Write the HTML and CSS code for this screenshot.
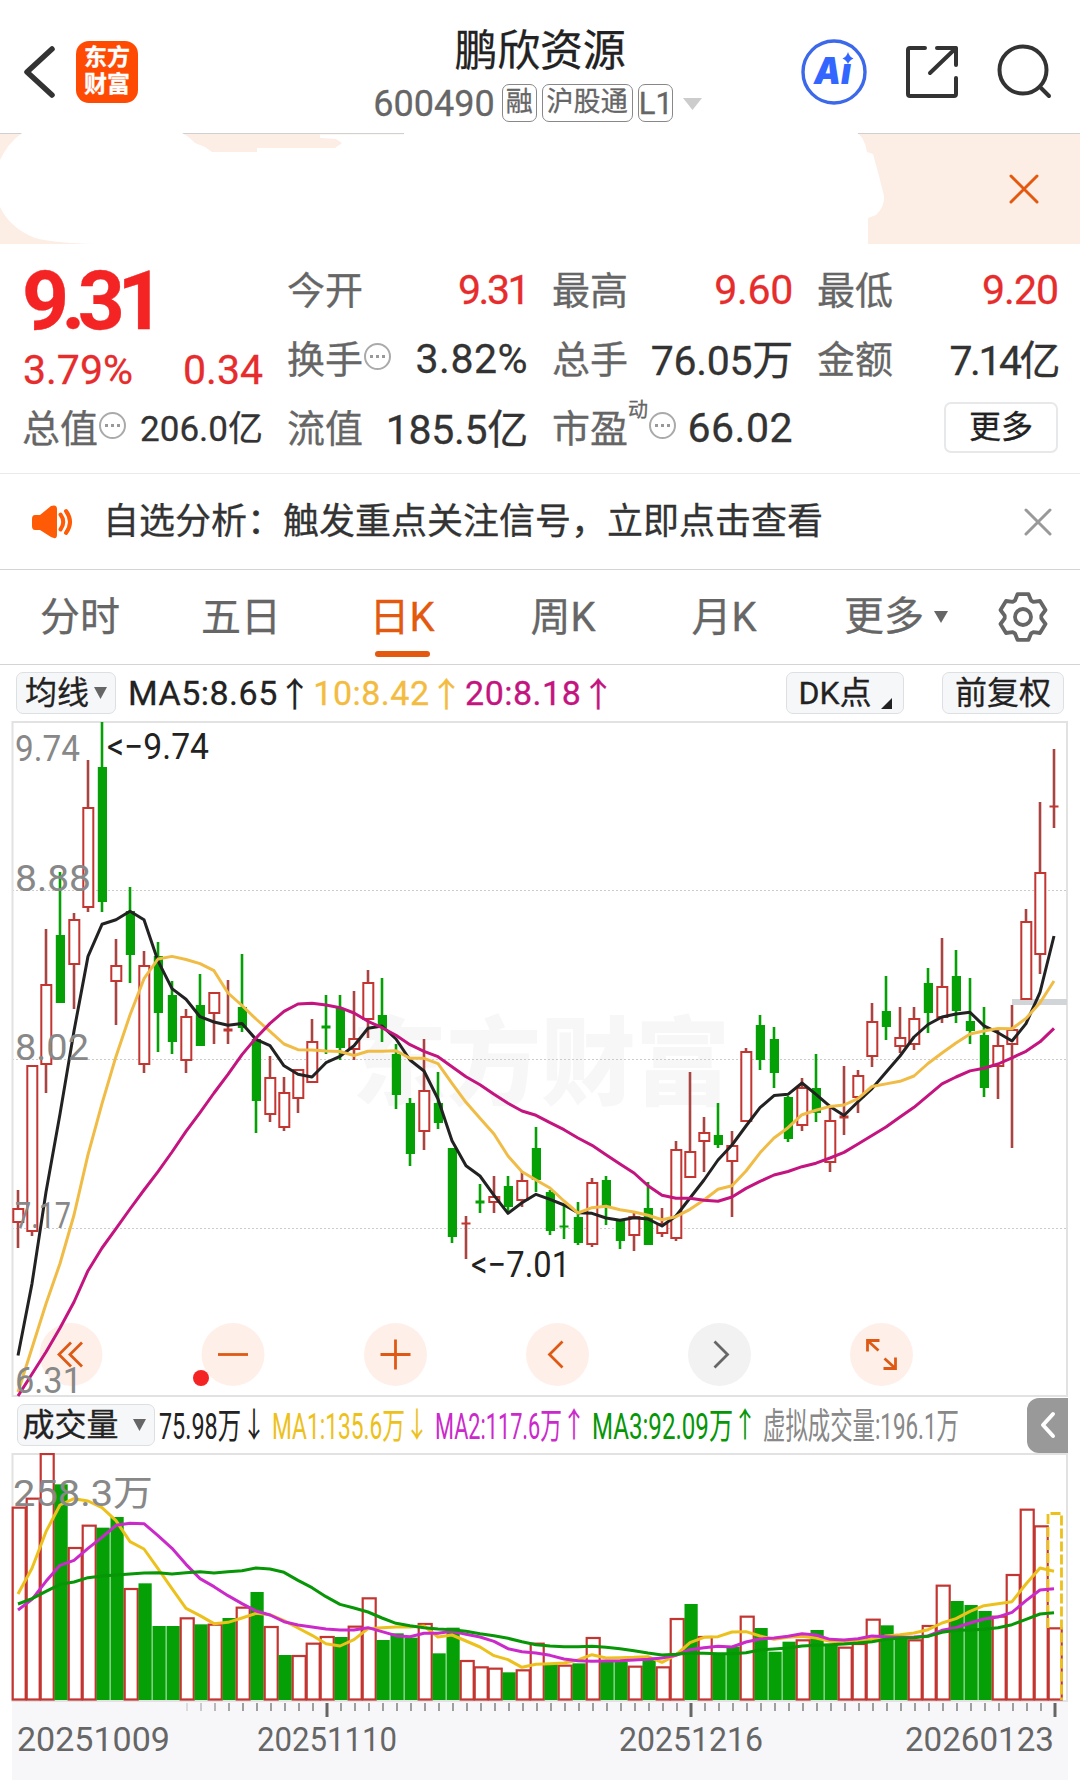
FILE: index.html
```html
<!DOCTYPE html>
<html lang="zh-CN">
<head>
<meta charset="utf-8">
<title>鹏欣资源 600490</title>
<link rel="stylesheet" href="styles.css">
</head>
<body>
<header class="topbar">
  <div class="topbar-left">
    <svg class="back" width="34" height="56" viewBox="0 0 34 56"><path d="M30 5 L5 28 L30 51"/></svg>
    <div class="logo"><span>东方</span><span>财富</span></div>
  </div>
  <div class="topbar-title">
    <h1>鹏欣资源</h1>
    <div class="subtitle">
      <span class="code">600490</span>
      <span class="tag">融</span><span class="tag tag-wide">沪股通</span><span class="tag tag-l1">L1</span>
      <svg class="caret" width="19" height="12" viewBox="0 0 19 12"><path d="M0 0H19L9.500 12Z" fill="#ccc"/></svg>
    </div>
  </div>
  <div class="topbar-right">
    <svg width="66" height="66" viewBox="0 0 66 66">
      <circle cx="33" cy="33" r="31" fill="#fff" stroke="#3c68ea" stroke-width="3.400"/>
      <text class="ai" x="13" y="45" textLength="37" lengthAdjust="spacingAndGlyphs">Aı</text>
      <path d="M47 13 Q48.500 18 52.500 19.500 Q48.500 21 47 25 Q45.500 21 41.500 19.500 Q45.500 18 47 13Z" fill="#3366ff"/>
    </svg>
    <svg width="54" height="54" viewBox="0 0 54 54" class="line-icon"><path d="M20 3H5Q3 3 3 5V49Q3 51 5 51H49Q51 51 51 49V33M32 3H51V20M51 3L25 28"/></svg>
    <svg width="56" height="56" viewBox="0 0 56 56" class="line-icon"><circle cx="26" cy="26" r="23.500"/><path d="M43 43L52 52"/></svg>
  </div>
</header>

<section class="banner">
  <svg class="banner-cover" width="1080" height="111" viewBox="0 133 1080 111">
    <path class="rule" d="M0 133.500H22M182 133.500H404M858 133.500H1080"/>
    <path fill="#fff" d="M22 133 Q8 143 0 160 V207 Q10 228 35 238 Q55 243 95 244 H868 V218 L876 215 Q885 206 884 196 L879 176 L873 154 L867 152 Q864 136 857 133 H404 V134.500 H320 V138 L336 139 L342 143 L335 148 H257 V152 H212 L205 147 L195 143 Q187 135 182 133Z"/>
  </svg>
  <svg class="banner-close" width="30" height="30" viewBox="0 0 30 30"><path d="M2 2L28 28M28 2L2 28" stroke="#e2590f" stroke-width="3" stroke-linecap="round"/></svg>
</section>

<section class="quote">
  <div class="col">
    <div class="price">9.31</div>
    <div class="change red"><span>3.79%</span><span>0.34</span></div>
    <div class="cell"><span class="k">总值<i class="info"></i></span><span class="v small">206.0亿</span></div>
  </div>
  <div class="col">
    <div class="cell"><span class="k">今开</span><span class="v red tight">9.31</span></div>
    <div class="cell"><span class="k">换手<i class="info"></i></span><span class="v wide">3.82%</span></div>
    <div class="cell"><span class="k">流值</span><span class="v cjk">185.5亿</span></div>
  </div>
  <div class="col">
    <div class="cell"><span class="k">最高</span><span class="v red">9.60</span></div>
    <div class="cell"><span class="k">总手</span><span class="v cjk">76.05万</span></div>
    <div class="cell"><span class="k">市盈<sup>动</sup><i class="info"></i></span><span class="v wide">66.02</span></div>
  </div>
  <div class="col">
    <div class="cell"><span class="k">最低</span><span class="v red tight2">9.20</span></div>
    <div class="cell"><span class="k">金额</span><span class="v cjk tight">7.14亿</span></div>
    <div class="cell end"><span class="more">更多</span></div>
  </div>
</section>

<section class="notice">
  <svg width="42" height="36" viewBox="0 0 42 36">
    <path d="M3 11H8L19 2Q25 0 25 5V31Q25 36 19 33L8 26H3Q0 26 0 22V15Q0 11 3 11Z" fill="#ff5a06"/>
    <path d="M28.500 10.500Q34 18 28.500 25.500M34 7Q42 18 34 29" fill="none" stroke="#ff5a06" stroke-width="4" stroke-linecap="round"/>
  </svg>
  <p>自选分析：触发重点关注信号，立即点击查看</p>
  <svg class="notice-close" width="28" height="28" viewBox="0 0 28 28"><path d="M2 2L26 26M26 2L2 26" stroke="#999" stroke-width="3" stroke-linecap="round"/></svg>
</section>

<nav class="tabs">
  <span>分时</span><span>五日</span><span class="active">日K</span><span>周K</span><span>月K</span>
  <span class="tab-more">更多<svg width="14" height="12" viewBox="0 0 14 12"><path d="M0 0H14L7 12Z" fill="#666"/></svg></span>
  <svg width="54" height="54" viewBox="-27 -27 54 54" fill="none" stroke="#666" stroke-width="3.800" stroke-linejoin="round">
    <path d="M-8 -16.500L-5.500 -22.800H5.500L8 -16.500L10.300 -15.200L17 -16L22.500 -7L18.300 -1.300V1.300L22.500 7L17 16L10.300 15.200L8 16.500L5.500 22.800H-5.500L-8 16.500L-10.300 15.200L-17 16L-22.500 7L-18.300 1.300V-1.300L-22.500 -7L-17 -16L-10.300 -15.200Z"/>
    <circle r="8"/>
  </svg>
</nav>

<div class="legend">
  <span class="chip chip-ma">均线<svg width="13" height="12" viewBox="0 0 13 12"><path d="M0 0H13L6.500 12Z" fill="#666"/></svg></span>
  <span class="ma ma5">MA5:8.65<b>↑</b></span>
  <span class="ma ma10">10:8.42<b>↑</b></span>
  <span class="ma ma20">20:8.18<b>↑</b></span>
  <span class="chip chip-dk">DK点<svg width="11" height="11" viewBox="0 0 11 11"><path d="M11 0V11H0Z" fill="#222"/></svg></span>
  <span class="chip chip-fq">前复权</span>
</div>

<svg id="kline" width="1080" height="676" viewBox="0 721 1080 676"></svg>

<div class="vol-legend">
  <span class="chip chip-vol">成交量<svg width="13" height="12" viewBox="0 0 13 12"><path d="M0 0H13L6.500 12Z" fill="#666"/></svg></span>
  <svg class="vol-values" width="810" height="56" viewBox="155 0 810 56">
    <text x="159" y="41.500" textLength="82" lengthAdjust="spacingAndGlyphs" fill="#222">75.98万</text><text class="arr" x="242" y="40" textLength="24" lengthAdjust="spacingAndGlyphs" fill="#222">↓</text>
    <text x="272" y="41.500" textLength="133" lengthAdjust="spacingAndGlyphs" fill="#edc11c">MA1:135.6万</text><text class="arr" x="405" y="40" textLength="24" lengthAdjust="spacingAndGlyphs" fill="#edc11c">↓</text>
    <text x="435" y="41.500" textLength="127" lengthAdjust="spacingAndGlyphs" fill="#cb2acb">MA2:117.6万</text><text class="arr" x="562" y="40" textLength="24" lengthAdjust="spacingAndGlyphs" fill="#cb2acb">↑</text>
    <text x="592" y="41.500" textLength="141" lengthAdjust="spacingAndGlyphs" fill="#069606">MA3:92.09万</text><text class="arr" x="733" y="40" textLength="24" lengthAdjust="spacingAndGlyphs" fill="#069606">↑</text>
    <text class="thin" x="763" y="41.500" textLength="196" lengthAdjust="spacingAndGlyphs" fill="#888">虚拟成交量:196.1万</text>
  </svg>
  <span class="drawer"><svg width="16" height="28" viewBox="0 0 16 28"><path d="M13 3L3 14L13 25"/></svg></span>
</div>

<svg id="volume" width="1080" height="334" viewBox="0 1453 1080 334"></svg>
<script src="chart.js"></script>
</body>
</html>
```

FILE: styles.css
```css
* { box-sizing: border-box; }
body {
  margin: 0; width: 1080px; height: 1787px; overflow: hidden;
  background: #fff; color: #333;
  font-family: Roboto, "Noto Sans CJK SC", sans-serif;
  -webkit-text-stroke: .3px currentColor;
}
svg { display: block; flex: none; }
.red { color: #e62c2c; }

.topbar { display: grid; grid-template-columns: 1fr auto 1fr; height: 133px; padding: 0 27px 0 22px; }
.topbar-left, .topbar-right { display: flex; align-items: center; padding-top: 11px; }
.topbar-left { gap: 20px; }
.topbar-right { justify-content: flex-end; gap: 38px; padding-top: 10px; }
.back path { fill: none; stroke: #333; stroke-width: 5.500; stroke-linecap: round; stroke-linejoin: round; }
.logo {
  width: 62px; height: 62px; border-radius: 13px; background: #ff4a03; color: #fff;
  display: flex; flex-direction: column; align-items: center; justify-content: center;
  font-weight: 700; font-size: 23px; line-height: 27px; padding-bottom: 2px;
}
.topbar-title { display: flex; flex-direction: column; align-items: center; padding-top: 26px; }
h1 { margin: 0 0 0 5px; font-size: 43px; line-height: 50px; font-weight: 400; color: #222; letter-spacing: -.3px; }
.subtitle { display: flex; align-items: center; height: 53px; color: #666; }
.code { font-size: 36px; margin-right: 7px; padding-top: 2px; }
.tag {
  height: 38px; width: 35px; border: 1px solid #888; border-radius: 7px; margin-right: 5px;
  font-size: 27px; line-height: 35px; text-align: center; color: #666;
}
.tag-wide { width: 91px; letter-spacing: .2px; }
.tag-l1 { font-size: 31px; line-height: 37px; width: 35px; }
.caret { margin-left: 5px; margin-top: 2px; }
.line-icon { fill: none; stroke: #333; stroke-width: 4; stroke-linecap: round; stroke-linejoin: round; }
.ai { font: italic 900 37px Inter, sans-serif; fill: #3366ff; }

.banner { height: 111px; background: #fceee5; display: grid; align-items: center; justify-items: end; }
.banner > * { grid-area: 1 / 1; }
.rule { stroke: #d0d0d0; stroke-width: 1; }
.banner-close { margin-right: 41px; }

.quote { height: 230px; padding: 11px 24px 0 23px; display: grid; grid-template-columns: repeat(4, 240px); gap: 25px; border-bottom: 1px solid #eaeaea; }
.cell { height: 69px; display: flex; align-items: center; justify-content: space-between; white-space: nowrap; }
.k { font-size: 38px; color: #666; display: flex; align-items: center; letter-spacing: 0; margin: -5px 0 0 -1px; }
.v { font-size: 41px; letter-spacing: -.3px; }
.v.cjk { margin-top: -4px; }
.v.small { font-size: 35px; letter-spacing: 0; margin-top: -4px; }
.v.wide { letter-spacing: .5px; }
.v.tight { letter-spacing: -2.500px; }
.v.tight2 { letter-spacing: -1px; }
.price { height: 92px; font-size: 82px; line-height: 92px; font-weight: 700; color: #f42424; letter-spacing: -7.500px; margin-left: -1px; }
.change { height: 46px; line-height: 46px; display: flex; justify-content: space-between; font-size: 41px; }
.info {
  width: 27px; height: 27px; border: 2px solid #aaa; border-radius: 50%; margin: 0 0 0 1px;
  background: radial-gradient(circle at 5.500px 11.500px, #999 1.500px, transparent 2px),
    radial-gradient(circle at 11.500px 11.500px, #999 1.500px, transparent 2px),
    radial-gradient(circle at 17.500px 11.500px, #999 1.500px, transparent 2px);
}
sup { font-size: 20px; line-height: 20px; align-self: flex-start; padding-top: 2px; }
.end { justify-content: flex-end; }
.more { width: 114px; height: 51px; border: 2px solid #e6e8ea; border-radius: 7px; font-size: 32px; line-height: 46px; text-align: center; color: #222; }

.notice { height: 96px; border-bottom: 1px solid #d4d4d4; display: flex; align-items: center; padding: 0 28px 0 32px; }
.notice p { margin: 1px auto 0 29px; font-size: 36px; line-height: 50px; }

.tabs { height: 95px; border-bottom: 1px solid #d4d4d4; display: grid; grid-template-columns: 161px 161px 161px 161px 161px 161px 80px; align-items: center; text-align: center; font-size: 40px; color: #666; }
.tabs span { line-height: 96px; height: 94px; margin-left: -1px; }
.tabs .active { position: relative; color: #e2590f; }
.tabs .active::after { content: ""; position: absolute; left: 54px; top: 81px; width: 55px; height: 6px; border-radius: 3px; background: #e2590f; }
.tab-more { display: flex; align-items: center; justify-content: center; gap: 10px; padding-left: 22px; }
.tabs > svg { margin-left: 30px; }

.legend { height: 56px; display: flex; align-items: center; padding: 0 16px; font-size: 34px; white-space: nowrap; }
.chip { height: 42px; border: 1px solid #dde0e3; border-radius: 7px; background: #f6f7f9; color: #222; font-size: 32px; line-height: 38px; display: flex; align-items: center; justify-content: center; }
.chip-ma { width: 100px; gap: 5px; }
.ma { display: flex; align-items: center; letter-spacing: .5px; }
.ma b { font: 34px/40px "Noto Sans CJK SC", sans-serif; margin: 0 -8px 0 0; }
.ma5 { color: #222; margin-left: 12px; }
.ma10 { color: #f3bc41; margin-left: 9px; }
.ma20 { color: #c3147f; margin-left: 9px; }
.chip-dk { width: 118px; margin-left: auto; gap: 9px; }
.chip-dk svg { margin-top: 20px; }
.chip-fq { width: 122px; margin-left: 38px; }

.axis { font-size: 36px; fill: #888; }
.mark { font-size: 36px; fill: #222; }
.date { font-size: 34px; fill: #666; }
.watermark { font-size: 96px; font-weight: 900; fill: #f7f7f7; -webkit-text-stroke: 0; }
.line { fill: none; stroke-width: 3; stroke-linejoin: round; }

.vol-legend { height: 56px; display: flex; align-items: center; padding-left: 17px; }
.chip-vol { width: 138px; gap: 14px; padding-right: 4px; }
.vol-values text { font-size: 36px; }
.vol-values .arr { font-family: "Noto Sans CJK SC", sans-serif; font-size: 34px; }
.vol-values .thin { -webkit-text-stroke: 0; }
.drawer { width: 41px; height: 55px; margin: 0 12px 0 auto; background: #999; border-radius: 12px 0 0 12px; display: flex; align-items: center; justify-content: center; }
.drawer path { fill: none; stroke: #fff; stroke-width: 4; stroke-linecap: round; stroke-linejoin: round; }
```

FILE: chart.js
```js
const NS = 'http://www.w3.org/2000/svg';
const STEP = 14, FIRST = 18;
const RED = '#c23531', WICK = '#a94442', GREEN = '#05a005';
const cx = i => FIRST + i * STEP;

function add(parent, tag, attrs, text) {
  const el = document.createElementNS(NS, tag);
  for (const k in attrs) el.setAttribute(k, attrs[k]);
  if (text) el.textContent = text;
  parent.appendChild(el);
  return el;
}
function line(parent, ys, color) {
  add(parent, 'polyline', { class: 'line', stroke: color, points: ys.map((y, i) => cx(i) + ',' + y).join(' ') });
}
function label(parent, cls, x, y, width, text) {
  add(parent, 'text', { class: cls, x, y, textLength: width, lengthAdjust: 'spacingAndGlyphs' }, text);
}

// r = rising, g = falling; then high, body top, body bottom, low
const candles = `r 1190 1209 1222 1248|r 1066 1066 1231 1236|r 929 985 1064 1093|g 872 935 1003 1003|r 913 920 964 1009
r 760 808 907 912|g 722 767 902 912|r 939 966 981 1025|g 887 911 955 983|r 951 966 1064 1073
g 942 956 1013 1052|g 981 995 1042 1054|r 1009 1017 1060 1073|g 974 1005 1046 1046|r 992 993 1013 1044
r 980 1029 1031 1044|g 954 1007 1028 1032|g 1038 1039 1101 1133|r 1056 1078 1114 1122|r 1077 1093 1127 1131
r 1069 1070 1098 1113|r 1019 1042 1082 1082|g 995 1026 1028 1054|g 995 1008 1048 1060|r 991 1039 1049 1060
r 970 983 1019 1038|g 978 1015 1028 1042|g 1044 1054 1095 1109|g 1098 1103 1154 1166|r 1039 1091 1131 1150
g 1072 1103 1123 1129|g 1148 1148 1237 1243|r 1216 1223 1224 1259|g 1184 1201 1203 1213|r 1176 1197 1202 1213
g 1176 1186 1207 1213|r 1171 1181 1200 1207|g 1127 1148 1180 1192|g 1190 1192 1231 1235|g 1204 1226 1227 1239
g 1202 1217 1243 1245|r 1178 1183 1244 1247|g 1176 1180 1206 1225|g 1220 1221 1241 1249|r 1213 1217 1235 1251
g 1182 1208 1245 1245|r 1208 1224 1233 1237|r 1141 1150 1238 1241|r 1072 1152 1177 1177|r 1117 1133 1141 1172
g 1103 1135 1145 1148|r 1131 1146 1161 1217|r 1048 1052 1121 1121|g 1015 1025 1060 1070|g 1027 1039 1073 1088
g 1096 1097 1139 1142|r 1078 1088 1125 1131|g 1054 1088 1113 1122|r 1107 1121 1162 1172|r 1066 1116 1118 1135
r 1070 1076 1097 1113|r 1003 1022 1056 1067|g 976 1011 1027 1040|r 1007 1038 1046 1053|r 1007 1019 1044 1050
g 968 983 1013 1033|r 938 987 1017 1023|g 950 976 1011 1023|g 978 1021 1031 1044|g 1007 1035 1088 1097
r 1030 1046 1066 1099|r 1005 1030 1044 1148|r 909 922 999 999|r 802 873 954 974|r 749 806 807 828`
  .split(/[|\n]/).map(s => { const [t, ...v] = s.trim().split(' '); return [t, ...v.map(Number)]; });

const ma5 = [1355.5,1283.6,1192,1114,1031,956.4,924.3,919.8,911.3,919.8,960.9,988.6,999.3,1016.7,1022,1025.2,1023.4,1039.4,1045.7,1065.8,1074.3,1077,1062.7,1056.4,1045.7,1028.3,1026,1039,1060,1071,1099,1140.7,1165.7,1176,1195.3,1213.3,1202.7,1194.3,1199.3,1205,1212.7,1213.3,1218,1220.3,1217.7,1219,1226,1216,1198,1180,1160,1145,1126,1107.7,1095.6,1094.3,1083,1094.3,1106.4,1115.5,1101.7,1088.6,1072.2,1056,1037,1024.5,1017,1014,1012.3,1025.8,1032.7,1041,1023.6,992.4,936];
const ma10 = [1392,1348,1303.7,1263.5,1215,1154.6,1103.7,1056.4,1015,978.7,959,956.4,959.5,963.6,970.7,993,1005.5,1019,1031.4,1044,1049.7,1050,1051,1051.5,1055.5,1051.3,1051.3,1050.7,1058.3,1058.3,1063.7,1083.3,1102.3,1118.3,1134,1156,1171.7,1180,1188,1201,1213,1207.7,1206.3,1209.7,1212,1215.3,1219.7,1216.7,1209.3,1200,1189.3,1185.8,1171,1152.8,1138,1127.7,1114.7,1110.3,1106.4,1105,1098.6,1086.5,1083.9,1081.3,1076,1063.5,1053,1043,1034,1031,1028.4,1028.8,1018.4,1002.8,981];
const ma20 = [1396,1374,1352,1328,1302,1270.7,1248,1228.7,1209,1190,1171.6,1152,1131.4,1112.6,1093,1074.3,1054.6,1038,1023.4,1011.3,1004,1003.3,1005,1007.7,1013,1021.3,1027.7,1035.3,1044.7,1051.3,1056.7,1066.7,1076.7,1084.7,1094.3,1103.3,1111,1115.3,1122.7,1129.7,1138,1145.3,1154.7,1164,1173,1185.7,1195.3,1198.3,1198.3,1200.3,1201.3,1197,1188.4,1181.4,1175,1171.5,1166.7,1163.2,1158,1152.4,1144,1135.5,1127,1117,1107.3,1095.6,1083.9,1077,1070.9,1068.3,1064,1057.8,1051.3,1041.8,1028.4];

const k = document.getElementById('kline');
label(k, 'watermark', 352, 1097, 378, '东方财富');
for (const y of [890.5, 1059.5, 1228.5]) add(k, 'path', { d: `M12 ${y}H1067`, stroke: '#ccc', 'stroke-dasharray': '2 2' });
add(k, 'rect', { x: 12.5, y: 722, width: 1054.5, height: 674, fill: 'none', stroke: '#e2e2e2', 'stroke-width': 2 });

// floating chart controls
const controls = [
  [71, 'M0 -12L-12 0L0 12M11 -12L-1 0L11 12'], [233, 'M-15 0H15'], [395.5, 'M-15 0H15M0 -15V15'],
  [557.5, 'M5 -13L-8 0L5 13'], [719.5, 'M-5 -13L8 0L-5 13'],
  [881.5, 'M-14 -3V-14H-2M-14 -14L-3 -4M14 3V14H2M14 14L3 4']];
controls.forEach(([x, d], i) => {
  const g = add(k, 'g', { transform: `translate(${x} 1354.500)` });
  add(g, 'circle', { r: 31.5, fill: i === 4 ? '#f2f2f2' : '#fef0e9' });
  add(g, 'path', { d, fill: 'none', stroke: i === 4 ? '#666' : '#de5a14', 'stroke-width': 2.8 });
});
add(k, 'circle', { cx: 201, cy: 1378, r: 8, fill: '#f42424' });
add(k, 'rect', { x: 1012, y: 999, width: 55, height: 6, fill: '#d2d5d8' });

candles.forEach(([t, hi, top, bottom, lo], i) => {
  const x = cx(i), up = t === 'r', color = up ? RED : GREEN;
  if (hi < top) add(k, 'path', { d: `M${x} ${hi}V${top}`, stroke: up ? WICK : GREEN, 'stroke-width': 2.6 });
  if (lo > bottom) add(k, 'path', { d: `M${x} ${bottom}V${lo}`, stroke: up ? WICK : GREEN, 'stroke-width': 2.6 });
  if (bottom - top < 4) add(k, 'rect', { x: x - 4.5, y: top - .5, width: 9, height: bottom - top + 1, fill: color });
  else if (up) add(k, 'rect', { x: x - 4.7, y: top, width: 10, height: bottom - top, fill: '#fff', stroke: color, 'stroke-width': 2 });
  else add(k, 'rect', { x: x - 4.2, y: top, width: 9.2, height: bottom - top, fill: color });
});
line(k, ma5, '#222'); line(k, ma10, '#f0bc45'); line(k, ma20, '#c3147f');
label(k, 'axis', 15, 761, 65, '9.74');
label(k, 'axis', 15, 891, 76, '8.88');
label(k, 'axis', 15, 1060, 74, '8.02');
label(k, 'axis', 15, 1228, 56, '7.17');
label(k, 'axis', 15, 1392.5, 67, '6.31');
label(k, 'mark', 107, 759, 102, '<−9.74');
label(k, 'mark', 471, 1277, 99, '<−7.01');

// volume bars: direction + top edge, measured in thirds of a pixel below y = 1390
const bars = 'r353 r326 r192 g283 r474 r407 g413 g381 r597 g580 g708 g708 r685 g703 r704 g684 r653 g606 r711 g795 r798 r761 r741 g741 r710 r625 g750 g730 g743 r702 g790 g713 r813 r832 r836 g847 r841 r761 g820 r827 g820 r744 g815 g815 r830 g810 r832 r687 g642 r741 g790 g770 r680 g714 g785 g755 r751 g720 g765 r773 r762 r689 g706 g743 r751 r708 r587 g633 g645 g663 r680 r555 r359 r409 r715'.split(' ');
const vma1 = [612,535,425,345,326,333,353,392,455,477,536,596,655,677,701,697,684,670,674,692,714,736,761,768,749,716,713,711,711,708,741,735,753,771,797,809,832,823,821,819,810,794,804,803,802,800,817,795,758,742,740,726,725,738,748,742,739,744,754,756,752,748,738,734,729,719,699,686,664,647,641,635,582,534,544];
const vma2 = [660,628,574,526,511,475,442,406,400,401,437,475,523,566,590,617,641,663,675,695,705,711,717,720,720,713,725,737,740,730,730,724,733,741,754,776,785,789,796,807,812,814,813,812,810,808,804,796,779,773,769,771,756,747,744,739,731,735,748,750,746,738,740,742,741,738,721,713,699,687,681,667,632,600,596];
const vma3 = [642,626,604,583,576,563,558,555,552,549,548,552,548,545,549,545,542,534,537,547,571,593,620,643,654,666,684,700,707,713,717,719,724,731,737,745,755,764,768,770,770,769,772,776,782,789,795,793,789,790,791,791,788,780,777,774,768,766,764,762,759,755,748,744,743,739,727,721,720,718,713,704,688,672,668];
const vy = v => 1390 + v / 3;
const BASE = 1699.5;

const vol = document.getElementById('volume');
add(vol, 'rect', { x: 12, y: 1702, width: 1056, height: 78, fill: '#f7f7fa' });
add(vol, 'rect', { x: 12.5, y: 1454, width: 1054.5, height: 247, fill: 'none', stroke: '#e2e2e2', 'stroke-width': 2 });
bars.forEach((b, i) => {
  const y = vy(+b.slice(1)), x = cx(i);
  if (b[0] === 'r') add(vol, 'rect', { x: x - 5.3, y: y, width: 13, height: BASE - y, fill: '#fff', stroke: RED, 'stroke-width': 2.2 });
  else add(vol, 'rect', { x: x - 5.5, y: y, width: 13.2, height: BASE - y + .5, fill: GREEN });
});
add(vol, 'path', { d: 'M1048 1628V1513.500H1061.500V1700', fill: 'none', stroke: '#edc11c', 'stroke-width': 2.8, 'stroke-dasharray': '10 3' });
line(vol, vma1.map(vy), '#edc11c'); line(vol, vma2.map(vy), '#cb2acb'); line(vol, vma3.map(vy), '#069606');
label(vol, 'axis', 13, 1506, 140, '258.3万');
for (let i = 12; i < 75; i++) {
  const major = i === 22 || i === 48 || i === 74;
  add(vol, 'path', { d: `M${cx(i) + 1} 1703V${major ? 1717 : 1711}`, stroke: major ? '#666' : '#888', 'stroke-width': major ? 3 : 1.6, opacity: Math.min(1, .3 + (i - 12) * .2) });
}
label(vol, 'date', 17, 1751, 153, '20251009');
label(vol, 'date', 257, 1751, 140, '20251110');
label(vol, 'date', 619, 1751, 144, '20251216');
label(vol, 'date', 905, 1751, 149, '20260123');
```
